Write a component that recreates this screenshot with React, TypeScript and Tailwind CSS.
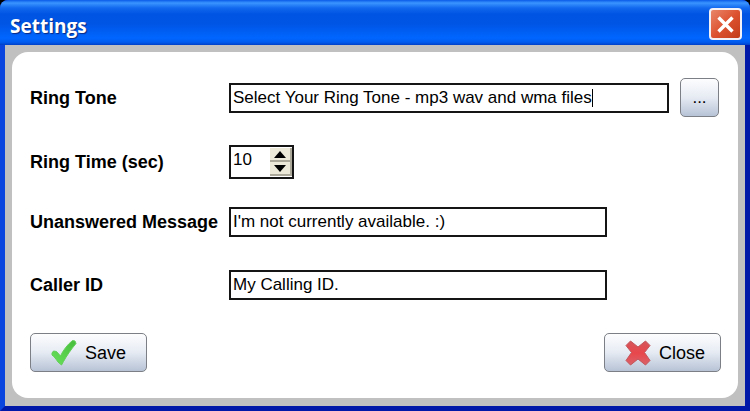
import { useState } from 'react'
import type { ReactNode } from 'react'

const FIELD =
  'block h-[30px] w-full rounded-none border-2 border-[#151515] bg-white px-[2px] text-[17px] leading-5 text-black outline-none'
const BUTTON =
  'flex h-[39px] items-center rounded-[5px] border border-[#7c7f85] bg-linear-to-b from-[#fdfdfe] via-[#e6ebf3] to-[#b7c3d6] text-black'
const SPIN = 'flex flex-1 items-center justify-center border-r-2 border-b-2 border-[#aca899] bg-[#ece9d8]'

interface RowProps {
  id: string
  label: string
  children: ReactNode
}

function Row({ id, label, children }: RowProps) {
  return (
    <div className="flex items-center">
      <label htmlFor={id} className="w-[199px] shrink-0 text-[18px] leading-6 font-bold whitespace-nowrap">
        {label}
      </label>
      {children}
    </div>
  )
}

function CheckIcon() {
  return (
    <svg width="26" height="27" viewBox="0 0 26 27" aria-hidden="true">
      <defs>
        <linearGradient id="check" x1="0" y1="1" x2="1" y2="0">
          <stop offset="0" stopColor="#6be25c" />
          <stop offset="1" stopColor="#45bd3c" />
        </linearGradient>
      </defs>
      <path
        d="M1 14 L2.5 12 L5.5 12.5 L9.5 17 C12 11.5 16 6 21.5 1.5 L24 2 L25 4.5 C20 10.5 15.5 17 12.5 22.5 L10.5 26 L7 23 C5 20 3 17.5 1 16 Z"
        fill="url(#check)"
        stroke="#62cf58"
        strokeWidth="1"
        strokeLinejoin="round"
      />
    </svg>
  )
}

function CrossIcon() {
  return (
    <svg width="26" height="26" viewBox="0 0 26 26" aria-hidden="true">
      <defs>
        <linearGradient id="cross" x1="0" y1="0" x2="0" y2="1">
          <stop offset="0" stopColor="#d4555a" />
          <stop offset="0.5" stopColor="#e8474c" />
          <stop offset="1" stopColor="#d9626a" />
        </linearGradient>
      </defs>
      <path
        d="M5.5 1 L13 7 L20.5 1 L25 5.5 L19.5 12.5 L25 20.5 L20.5 25 L13 19 L5.5 25 L1 20.5 L6.5 12.5 L1 5.5 Z"
        fill="url(#cross)"
        stroke="#c2555b"
        strokeWidth="1"
        strokeLinejoin="round"
      />
    </svg>
  )
}

export default function App() {
  const [ringTone, setRingTone] = useState('Select Your Ring Tone - mp3 wav and wma files')
  const [ringTime, setRingTime] = useState(10)
  const [message, setMessage] = useState("I'm not currently available. :)")
  const [callerId, setCallerId] = useState('My Calling ID.')

  return (
    <div className="bg-black font-['Liberation_Sans',Arial,sans-serif] text-black">
      <div className="overflow-hidden rounded-t-[8px] bg-[#0831d9]">
        <header className="flex h-[45px] items-center justify-between bg-[linear-gradient(180deg,#0a5ae8_0px,#3b95ff_3px,#1268ee_8px,#0054e3_14px,#0055e5_24px,#0066ff_38px,#005cf0_42px,#0040c8_45px)] pt-[3px] pr-2 pl-[10px]">
          <h1 className="pt-1 font-['Open_Sans',sans-serif] text-[19px] leading-6 font-bold text-white [text-shadow:1px_1px_1px_#0a2a80]">
            Settings
          </h1>
          <button
            type="button"
            aria-label="Close window"
            className="flex h-8 w-[33px] items-center justify-center rounded-[4px] border-2 border-[#f3f1f8] bg-linear-to-br from-[#e8866a] via-[#dd5230] to-[#c23c18]"
          >
            <svg width="19" height="19" viewBox="0 0 19 19" aria-hidden="true">
              <path d="M2.5 2.5 L16.5 16.5 M16.5 2.5 L2.5 16.5" stroke="#fff" strokeWidth="3.4" />
            </svg>
          </button>
        </header>

        <div className="border-x-[5px] border-b-[5px] border-r-[#0018a8] border-b-[#0018a8] border-l-[#0a45e0]">
          <main className="bg-[#c0c0c0] px-[7px] pt-[7px] pb-2">
            <form
              className="rounded-[16px] bg-white pt-[26px] pr-[17px] pb-[26px] pl-[18px]"
              onSubmit={(e) => e.preventDefault()}
            >
              <div className="pr-[2px]">
                <Row id="ring-tone" label="Ring Tone">
                  <div className="relative flex-1">
                    <input id="ring-tone" value={ringTone} onChange={(e) => setRingTone(e.target.value)} className={FIELD} />
                    <span className="absolute top-[6px] left-[363px] h-[18px] w-px bg-black" />
                  </div>
                  <button type="button" className={`${BUTTON} ml-[11px] w-[39px] justify-center text-[17px] leading-5 text-[#16306a]`}>
                    ...
                  </button>
                </Row>
              </div>

              <div className="mt-7">
                <Row id="ring-time" label="Ring Time (sec)">
                  <div className="flex h-[34px] w-[65px] border-2 border-[#151515] bg-white">
                    <input
                      id="ring-time"
                      inputMode="numeric"
                      value={ringTime}
                      onChange={(e) => setRingTime(Number(e.target.value) || 0)}
                      className="h-[26px] min-w-0 flex-1 px-[2px] text-[17px] leading-5 outline-none"
                    />
                    <div className="flex w-[22px] flex-col py-px">
                      <button type="button" aria-label="Increase" onClick={() => setRingTime(ringTime + 1)} className={SPIN}>
                        <svg width="12" height="7" viewBox="0 0 12 7" aria-hidden="true">
                          <path d="M6 0 L12 7 H0 Z" />
                        </svg>
                      </button>
                      <button type="button" aria-label="Decrease" onClick={() => setRingTime(ringTime - 1)} className={SPIN}>
                        <svg width="12" height="7" viewBox="0 0 12 7" aria-hidden="true">
                          <path d="M0 0 H12 L6 7 Z" />
                        </svg>
                      </button>
                    </div>
                  </div>
                </Row>
              </div>

              <div className="mt-7 pr-[114px]">
                <Row id="message" label="Unanswered Message">
                  <input id="message" value={message} onChange={(e) => setMessage(e.target.value)} className={FIELD} />
                </Row>
              </div>

              <div className="mt-[33px] pr-[114px]">
                <Row id="caller-id" label="Caller ID">
                  <input id="caller-id" value={callerId} onChange={(e) => setCallerId(e.target.value)} className={FIELD} />
                </Row>
              </div>

              <div className="mt-[33px] flex justify-between">
                <button type="submit" className={`${BUTTON} w-[117px] gap-2 pl-5 text-[18px] leading-5`}>
                  <CheckIcon />
                  Save
                </button>
                <button type="button" className={`${BUTTON} w-[117px] gap-2 pl-5 text-[18px] leading-5`}>
                  <CrossIcon />
                  Close
                </button>
              </div>
            </form>
          </main>
        </div>
      </div>
    </div>
  )
}
